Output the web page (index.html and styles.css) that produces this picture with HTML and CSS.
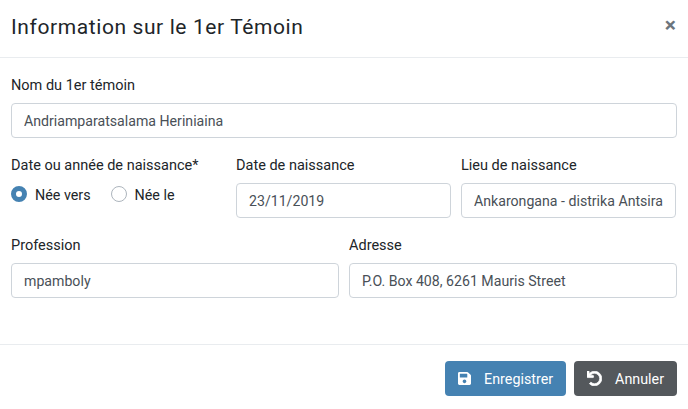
FILE: index.html
```html
<!DOCTYPE html>
<html lang="fr">
<head>
    <meta charset="UTF-8">
    <title>Information sur le 1er Témoin</title>
    <link rel="stylesheet" href="styles.css">
</head>
<body>
    <div class="modal">
        <div class="modal-header">
            <h4 class="modal-title">Information sur le 1er Témoin</h4>
            <span class="close">×</span>
        </div>
        <div class="modal-body">
            <div class="row">
                <div class="field">
                    <label>Nom du 1er témoin</label>
                    <input class="control" type="text" value="Andriamparatsalama Heriniaina">
                </div>
            </div>
            <div class="row row-3">
                <div class="field">
                    <label>Date ou année de naissance*</label>
                    <div class="radios">
                        <label class="radio"><input type="radio" name="naissance" checked> Née vers</label>
                        <label class="radio"><input type="radio" name="naissance"> Née le</label>
                    </div>
                </div>
                <div class="field">
                    <label>Date de naissance</label>
                    <input class="control" type="text" value="23/11/2019">
                </div>
                <div class="field">
                    <label>Lieu de naissance</label>
                    <input class="control" type="text" value="Ankarongana - distrika Antsirabe">
                </div>
            </div>
            <div class="row row-2">
                <div class="field">
                    <label>Profession</label>
                    <input class="control" type="text" value="mpamboly">
                </div>
                <div class="field">
                    <label>Adresse</label>
                    <input class="control" type="text" value="P.O. Box 408, 6261 Mauris Street">
                </div>
            </div>
        </div>
        <div class="modal-footer">
            <button class="btn btn-primary">
                <svg class="icon" viewBox="0 0 448 512"><path d="M433.941 129.941l-83.882-83.882A48 48 0 0 0 316.118 32H48C21.49 32 0 53.49 0 80v352c0 26.51 21.49 48 48 48h352c26.51 0 48-21.49 48-48V163.882a48 48 0 0 0-14.059-33.941zM224 416c-35.346 0-64-28.654-64-64 0-35.346 28.654-64 64-64s64 28.654 64 64c0 35.346-28.654 64-64 64zm96-304.52V212c0 6.627-5.373 12-12 12H76c-6.627 0-12-5.373-12-12V108c0-6.627 5.373-12 12-12h228.52c3.183 0 6.235 1.264 8.485 3.515l3.48 3.48A11.996 11.996 0 0 1 320 111.48z"/></svg>
                Enregistrer
            </button>
            <button class="btn btn-dark">
                <svg class="icon icon-undo" viewBox="0 0 512 512"><path d="M212.333 224.333H12c-6.627 0-12-5.373-12-12V12C0 5.373 5.373 0 12 0h48c6.627 0 12 5.373 12 12v78.112C117.773 39.279 184.26 7.47 258.175 8.007c136.906.994 246.448 111.623 246.157 248.532C504.041 393.258 393.12 504 256.333 504c-64.089 0-122.496-24.313-166.51-64.215-5.099-4.622-5.334-12.554-.467-17.42l33.967-33.967c4.474-4.474 11.662-4.717 16.401-.525C170.76 415.336 211.58 432 256.333 432c97.268 0 176-78.716 176-176 0-97.267-78.716-176-176-176-58.496 0-110.28 28.476-142.274 72.333h98.274c6.627 0 12 5.373 12 12v48c0 6.627-5.373 12-12 12z"/></svg>
                Annuler
            </button>
        </div>
    </div>
</body>
</html>
```

FILE: styles.css
```css
* {
    box-sizing: border-box;
}

body {
    margin: 0;
    background-color: #fff;
    font-family: Roboto, sans-serif;
    font-size: 14.4px;
    color: #212529;
}

.modal {
    display: flex;
    flex-direction: column;
    height: 409px;
}

.modal-header {
    display: flex;
    justify-content: space-between;
    height: 58px;
    padding: 15px 12px 0 11px;
    border-bottom: 1px solid #e9ecef;
}

.modal-title {
    margin: 0;
    font-size: 21px;
    font-weight: 400;
    line-height: 25px;
    letter-spacing: 0.6px;
}

.close {
    font-size: 21px;
    font-weight: 700;
    line-height: 21px;
    color: #6c757d;
}

.modal-body {
    height: 286px;
    padding: 17px 11px 0;
}

.row {
    display: grid;
    gap: 10px;
    height: 80px;
}

.row-3 {
    grid-template-columns: repeat(3, 215px);
}

.row-2 {
    grid-template-columns: repeat(2, 1fr);
}

.field {
    min-width: 0;
}

.field > label {
    display: block;
    height: 28px;
    padding-top: 1px;
    font-size: 14.5px;
    line-height: 20px;
}

.control {
    display: block;
    width: 100%;
    height: 35px;
    padding: 1px 12px 0;
    border: 1px solid #ced4da;
    border-radius: 4px;
    font-family: inherit;
    font-size: 14.15px;
    color: #495057;
}

.radios {
    display: flex;
    gap: 20px;
    margin-top: 2px;
}

.radio {
    display: flex;
    align-items: center;
    gap: 8px;
    font-size: 14.3px;
    line-height: 20px;
}

.radio input {
    appearance: none;
    width: 16px;
    height: 16px;
    margin: 0 0 2px;
    border: 1px solid #adb5bd;
    border-radius: 50%;
    background-color: #fff;
}

.radio input:checked {
    border: 5px solid #4582b2;
}

.modal-footer {
    display: flex;
    justify-content: flex-end;
    gap: 8px;
    padding: 16px 11px 0;
    border-top: 1px solid #e9ecef;
}

.btn {
    display: flex;
    align-items: center;
    height: 35px;
    padding: 0 13px;
    border: none;
    border-radius: 4px;
    font-family: inherit;
    font-size: 14.3px;
    color: #fff;
}

.btn-primary {
    background-color: #4582b2;
}

.btn-dark {
    background-color: #54585c;
}

.icon {
    width: 13px;
    height: 15px;
    margin-right: 13px;
    fill: #fff;
}

.icon-undo {
    width: 15px;
    margin-right: 13px;
    stroke: #fff;
    stroke-width: 24px;
}
```
